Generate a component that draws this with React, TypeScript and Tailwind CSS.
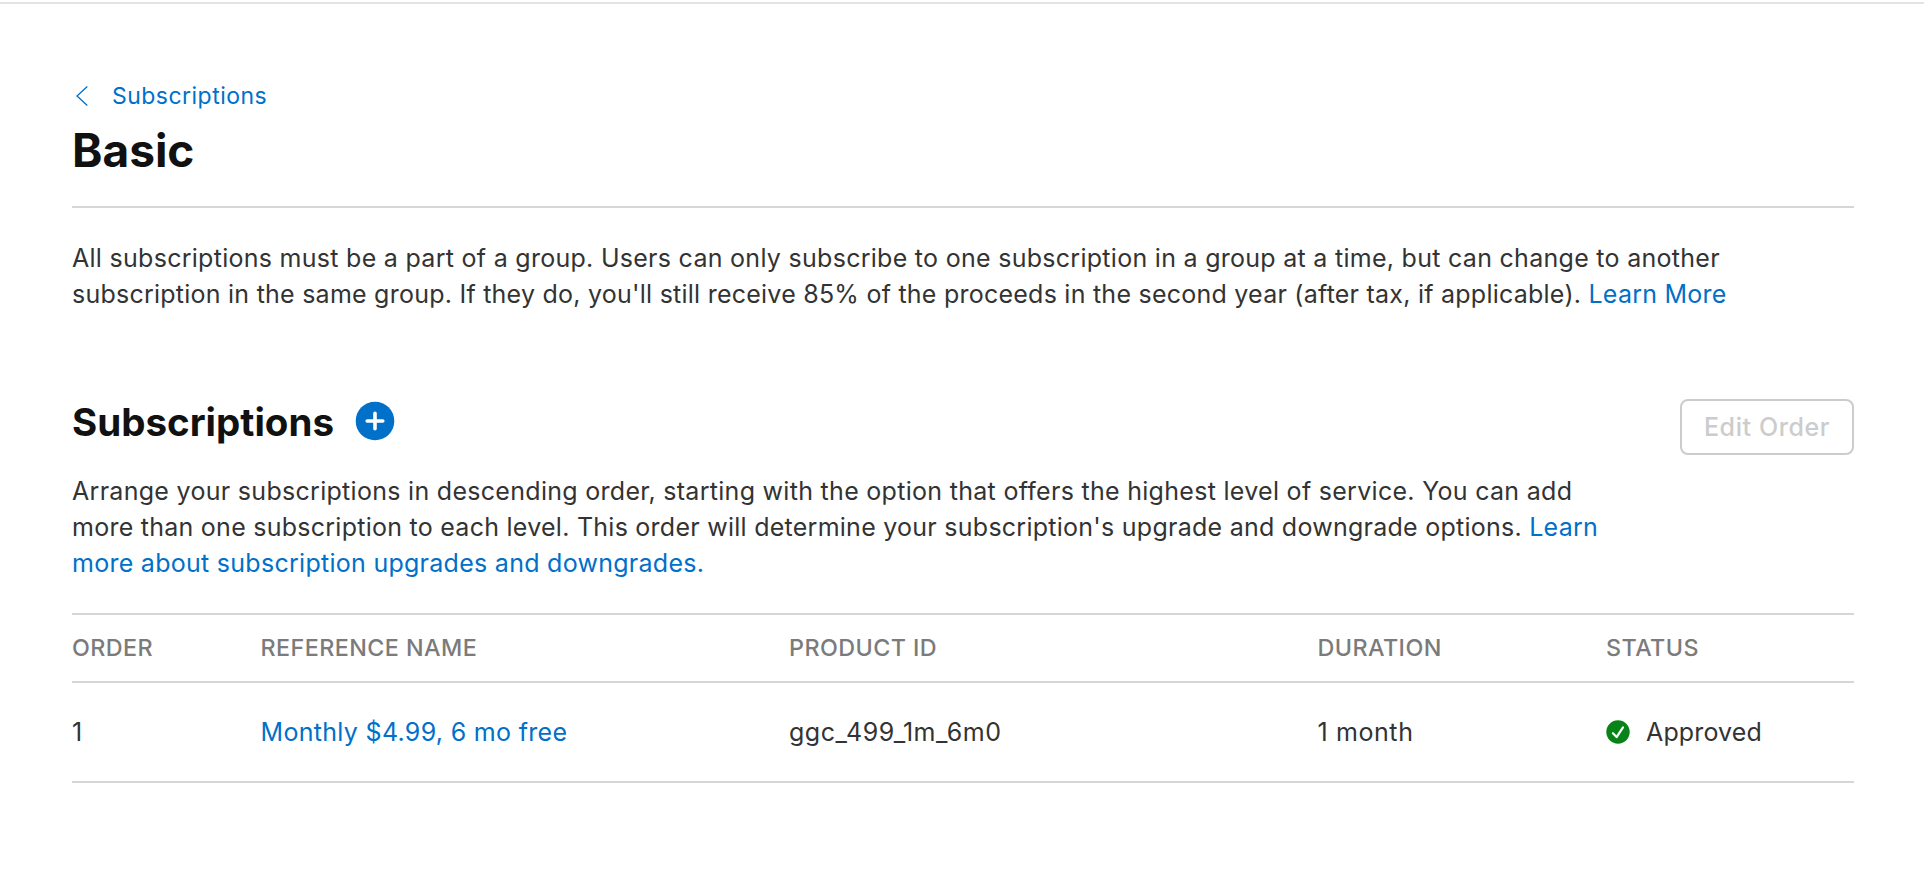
import type { ReactNode } from "react";

interface Subscription {
  order: number;
  name: string;
  productId: string;
  duration: string;
  status: string;
}

const SUBSCRIPTIONS: Subscription[] = [
  {
    order: 1,
    name: "Monthly $4.99, 6 mo free",
    productId: "ggc_499_1m_6m0",
    duration: "1 month",
    status: "Approved",
  },
];

const GRID = "grid grid-cols-[188.5px_528.5px_528.5px_288.5px_1fr] items-center";

function Link({ children }: { children: ReactNode }) {
  return (
    <a href="#" className="text-[#0070c9]">
      {children}
    </a>
  );
}

function ChevronLeftIcon() {
  return (
    <svg width="12" height="20" viewBox="0 0 12 20" fill="none">
      <path d="M11.3 0.6 1 10l10.3 9.4" stroke="#0070c9" strokeWidth="1.3" />
    </svg>
  );
}

function PlusCircleIcon() {
  return (
    <svg width="40" height="40" viewBox="0 0 40 40" fill="none">
      <circle cx="20" cy="20" r="19.3" fill="#0070c9" />
      <path
        d="M20 12.2v15.6M12.2 20h15.6"
        stroke="#fff"
        strokeWidth="3.6"
        strokeLinecap="round"
      />
    </svg>
  );
}

function ApprovedIcon() {
  return (
    <svg width="24" height="24" viewBox="0 0 24 24" fill="none">
      <circle cx="12" cy="12" r="11.7" fill="#078318" />
      <path
        d="m6.9 13.2 3.7 3.9 6.4-9.7"
        stroke="#fff"
        strokeWidth="2.2"
        strokeLinecap="round"
        strokeLinejoin="round"
      />
    </svg>
  );
}

function SubscriptionTable() {
  return (
    <div className="mt-8 border-y-2 border-[#d6d6d6]">
      <div
        className={`${GRID} h-[68px] border-b-2 border-[#d6d6d6] text-[23.3px] font-medium tracking-[0.45px] text-[#7b7b7b]`}
      >
        <div>ORDER</div>
        <div>REFERENCE NAME</div>
        <div>PRODUCT ID</div>
        <div>DURATION</div>
        <div>STATUS</div>
      </div>
      {SUBSCRIPTIONS.map((item) => (
        <div key={item.productId} className={`${GRID} h-[98px]`}>
          <div>{item.order}</div>
          <div className="tracking-[0.31px]">
            <Link>{item.name}</Link>
          </div>
          <div className="tracking-[0.53px]">{item.productId}</div>
          <div className="tracking-[0.6px]">{item.duration}</div>
          <div className="flex items-center gap-4 tracking-[0.15px]">
            <ApprovedIcon />
            <span>{item.status}</span>
          </div>
        </div>
      ))}
    </div>
  );
}

export default function App() {
  return (
    <div className="h-[896px] overflow-hidden bg-white pt-[2px] font-['Inter',sans-serif] text-[25px] leading-[36px] text-[#333]">
      <div className="border-t-2 border-[#e3e3e3] pl-[72px] pr-[70px]">
        <header className="h-[204px] border-b-2 border-[#d6d6d6] pt-[73.5px]">
          <nav className="flex h-[36px] items-center gap-[24px] pl-[4px] text-[23px] tracking-[0.47px]">
            <ChevronLeftIcon />
            <Link>Subscriptions</Link>
          </nav>
          <h1 className="mt-[6px] text-[46px] font-bold leading-[60px] text-[#111]">Basic</h1>
        </header>

        <p className="mt-8 whitespace-nowrap">
          <span className="block tracking-[0.282px]">
            All subscriptions must be a part of a group. Users can only subscribe to one
            subscription in a group at a time, but can change to another
          </span>
          <span className="block tracking-[0.24px]">
            subscription in the same group. If they do, you'll still receive 85% of the proceeds in
            the second year (after tax, if applicable). <Link>Learn More</Link>
          </span>
        </p>

        <section className="mt-[86px]">
          <div className="flex h-[75px] items-start justify-between">
            <div className="flex items-center gap-[21px]">
              <h2 className="text-[38.5px] font-bold leading-[48px] text-[#111]">
                Subscriptions
              </h2>
              <div className="-mt-[2px]">
                <PlusCircleIcon />
              </div>
            </div>
            <button
              disabled
              className="mt-[1px] h-[56px] w-[174px] rounded-[8px] border-2 border-[#ccc] font-medium tracking-[0.6px] text-[#ccc]"
            >
              Edit Order
            </button>
          </div>
          <p className="whitespace-nowrap">
            <span className="block tracking-[0.294px]">
              Arrange your subscriptions in descending order, starting with the option that offers
              the highest level of service. You can add
            </span>
            <span className="block tracking-[0.257px]">
              more than one subscription to each level. This order will determine your
              subscription's upgrade and downgrade options. <Link>Learn</Link>
            </span>
            <span className="block tracking-[0.275px]">
              <Link>more about subscription upgrades and downgrades.</Link>
            </span>
          </p>
          <SubscriptionTable />
        </section>
      </div>
    </div>
  );
}
